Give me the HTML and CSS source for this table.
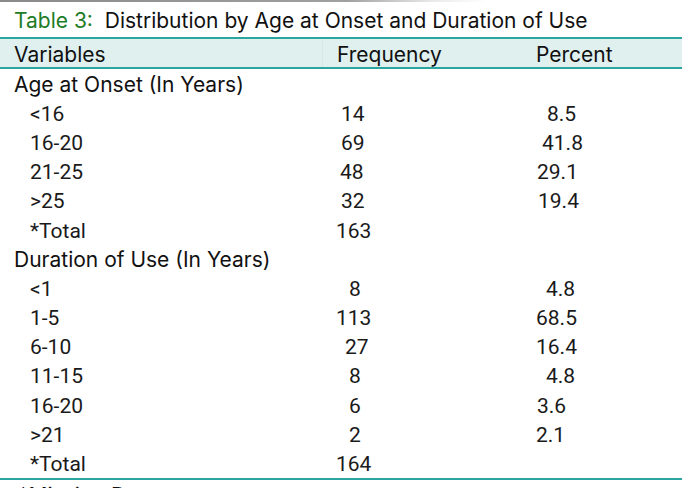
FILE: index.html
```html
<!DOCTYPE html>
<html lang="en">
<head>
<meta charset="utf-8">
<title>Table 3</title>
<link rel="stylesheet" href="styles.css">
</head>
<body>
<div class="topline"></div>
<h1 class="title"><span class="tnum">Table 3:</span>&nbsp; Distribution by Age at Onset and Duration of Use</h1>
<div class="table">
  <div class="row head">
    <div class="c1">Variables</div>
    <div class="c2 hdiv">Frequency</div>
    <div class="c3">Percent</div>
  </div>
  <div class="row section"><div class="c1">Age at Onset (In Years)</div><div></div><div></div></div>
  <div class="row"><div class="c1 ind">&lt;16</div><div class="c2 f5">14</div><div class="c3 p11">8.5</div></div>
  <div class="row"><div class="c1 ind">16-20</div><div class="c2 f5">69</div><div class="c3 p6">41.8</div></div>
  <div class="row"><div class="c1 ind">21-25</div><div class="c2 f4">48</div><div class="c3 p1">29.1</div></div>
  <div class="row"><div class="c1 ind">&gt;25</div><div class="c2 f5">32</div><div class="c3 p2">19.4</div></div>
  <div class="row"><div class="c1 ind">*Total</div><div class="c2 f0">163</div><div class="c3"></div></div>
  <div class="row section"><div class="c1">Duration of Use (In Years)</div><div></div><div></div></div>
  <div class="row"><div class="c1 ind">&lt;1</div><div class="c2 f12">8</div><div class="c3 p10">4.8</div></div>
  <div class="row"><div class="c1 ind">1-5</div><div class="c2 f0">113</div><div class="c3 p0">68.5</div></div>
  <div class="row"><div class="c1 ind">6-10</div><div class="c2 f9">27</div><div class="c3 p0">16.4</div></div>
  <div class="row"><div class="c1 ind">11-15</div><div class="c2 f12">8</div><div class="c3 p10">4.8</div></div>
  <div class="row"><div class="c1 ind">16-20</div><div class="c2 f12">6</div><div class="c3 p1">3.6</div></div>
  <div class="row"><div class="c1 ind">&gt;21</div><div class="c2 f12">2</div><div class="c3 p0">2.1</div></div>
  <div class="row last"><div class="c1 ind">*Total</div><div class="c2 f0">164</div><div class="c3"></div></div>
</div>
<p class="note">*Missing Data</p>
</body>
</html>
```
FILE: styles.css
```css
html, body {
  margin: 0;
  padding: 0;
  background: #ffffff;
  overflow: hidden;
}
body {
  width: 694px;
  height: 488px;
  font-family: "Roboto", "Liberation Sans", Arial, sans-serif;
  color: #1a1a1a;
}
.topline {
  height: 2px;
  background: linear-gradient(to right, #8a8a8a 0%, #a0a0a0 50%, #e8e8e8 62%, #ffffff 70%);
}
.title {
  margin: 0;
  height: 35px;
  display: flex;
  align-items: center;
  padding-left: 14px;
  padding-top: 2px;
  box-sizing: border-box;
  font-family: "Inter", "Open Sans", sans-serif;
  font-weight: 400;
  font-size: 21px;
  color: #111;
}
.tnum {
  color: #1e7b26;
}
.table {
  width: 682px;
}
.row {
  display: grid;
  grid-template-columns: 336px 200px 1fr;
  height: 29.2px;
  align-items: center;
  font-size: 21px;
  padding-top: 2px;
  box-sizing: border-box;
}
.head {
  height: 32px;
  padding-top: 2px;
  background: #dff0ef;
  border-top: 2px solid #2aa59f;
  border-bottom: 2px solid #2aa59f;
  font-family: "Inter", "Open Sans", sans-serif;
  font-size: 21px;
  color: #111;
}
.head > div {
  height: 100%;
  display: flex;
  align-items: center;
}
.hdiv {
  border-left: 1px solid #d4e8e6;
  margin-left: -14px;
  padding-left: 14px;
}
.section {
  font-family: "Inter", "Open Sans", sans-serif;
  color: #111;
}
.last {
  height: 31.2px;
  border-bottom: 2px solid #2aa59f;
}
.c1 {
  padding-left: 14px;
  white-space: nowrap;
}
.c1.ind {
  padding-left: 30px;
}
.f0 { padding-left: 0; }
.f4 { padding-left: 4px; }
.f5 { padding-left: 5px; }
.f9 { padding-left: 9px; }
.f12 { padding-left: 13px; }
.p0 { padding-left: 0; }
.p1 { padding-left: 1px; }
.p2 { padding-left: 2px; }
.p6 { padding-left: 6px; }
.p10 { padding-left: 10px; }
.p11 { padding-left: 11px; }
.note {
  margin: 3px 0 0 0;
  padding-left: 18px;
  font-family: "Inter", "Open Sans", sans-serif;
  font-size: 21px;
  color: #111;
}
```
